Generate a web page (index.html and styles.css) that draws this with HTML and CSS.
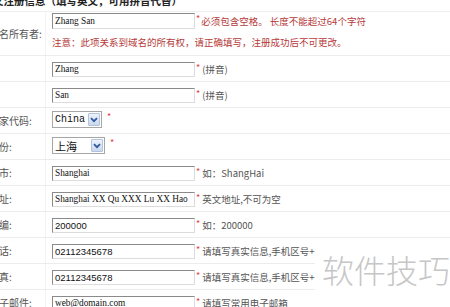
FILE: index.html
```html
<!DOCTYPE html>
<html lang="zh">
<head>
<meta charset="utf-8">
<link rel="stylesheet" href="styles.css">
</head>
<body>
<div class="page">
  <div class="title">文注册信息（填写英文，可用拼音代替）</div>
  <div class="form">
    <div class="row tall">
      <div class="label">域名所有者:</div>
      <div class="field">
        <div class="line"><span class="input">Zhang San</span><span class="star">*</span><span class="warn">必须包含空格。 长度不能超过64个字符</span></div>
        <div class="note">注意：此项关系到域名的所有权，请正确填写，注册成功后不可更改。</div>
      </div>
    </div>
    <div class="row">
      <div class="label"></div>
      <div class="field"><span class="input">Zhang</span><span class="star">*</span><span class="hint">(拼音)</span></div>
    </div>
    <div class="row">
      <div class="label"></div>
      <div class="field"><span class="input">San</span><span class="star">*</span><span class="hint">(拼音)</span></div>
    </div>
    <div class="row">
      <div class="label">国家代码:</div>
      <div class="field sel"><span class="select mono">China<span class="arrow"><svg width="8" height="6" viewBox="0 0 8 6"><path d="M1 1.2 L4 4.2 L7 1.2" fill="none" stroke="#2f5a9e" stroke-width="1.8"/></svg></span></span><span class="star sp">*</span></div>
    </div>
    <div class="row">
      <div class="label">省份:</div>
      <div class="field sel"><span class="select cn">上海<span class="arrow"><svg width="8" height="6" viewBox="0 0 8 6"><path d="M1 1.2 L4 4.2 L7 1.2" fill="none" stroke="#2f5a9e" stroke-width="1.8"/></svg></span></span><span class="star sp">*</span></div>
    </div>
    <div class="row">
      <div class="label">城市:</div>
      <div class="field"><span class="input">Shanghai</span><span class="star">*</span><span class="hint">如：ShangHai</span></div>
    </div>
    <div class="row">
      <div class="label">地址:</div>
      <div class="field"><span class="input">Shanghai XX Qu XXX Lu XX Hao</span><span class="star">*</span><span class="hint">英文地址,不可为空</span></div>
    </div>
    <div class="row">
      <div class="label">邮编:</div>
      <div class="field"><span class="input num">200000</span><span class="star">*</span><span class="hint">如：200000</span></div>
    </div>
    <div class="row">
      <div class="label">电话:</div>
      <div class="field"><span class="input num">02112345678</span><span class="star">*</span><span class="hint">请填写真实信息,手机区号+号码</span></div>
    </div>
    <div class="row">
      <div class="label">传真:</div>
      <div class="field"><span class="input num">02112345678</span><span class="star">*</span><span class="hint">请填写真实信息,手机区号+号码</span></div>
    </div>
    <div class="row">
      <div class="label">电子邮件:</div>
      <div class="field"><span class="input">web@domain.com</span><span class="star">*</span><span class="hint">请填写常用电子邮箱</span></div>
    </div>
  </div>
  <div class="watermark">软件技巧</div>
</div>
</body>
</html>
```

FILE: styles.css
```css
html, body {
  margin: 0;
  padding: 0;
  background: #fff;
  overflow: hidden;
  width: 450px;
  height: 307px;
}
.page {
  position: relative;
  width: 450px;
  height: 307px;
  overflow: hidden;
  font-family: "Noto Sans CJK SC", "Liberation Sans", sans-serif;
  font-size: 10px;
  color: #555;
}
.title {
  margin: -5px 0 0 -7px;
  height: 16px;
  line-height: 12px;
  font-weight: bold;
  font-size: 10.5px;
  color: #222;
  white-space: nowrap;
}
.form {
  margin-left: -11px;
  border-top: 1px solid #efefef;
}
.row {
  display: grid;
  grid-template-columns: 56px 1fr;
  height: 25px;
  border-bottom: 1px solid #ececec;
}
.row.tall {
  height: 43px;
}
.label {
  align-self: center;
  white-space: nowrap;
  color: #555;
  font-size: 10px;
  line-height: 12px;
}
.field {
  display: flex;
  align-items: flex-start;
  white-space: nowrap;
  border-left: 1px solid #f3f3f3;
  padding: 6px 0 0 6px;
}
.field.sel {
  padding-top: 3px;
}
.row.tall .field {
  flex-direction: column;
  padding-top: 1px;
  gap: 7px;
}
.line {
  display: flex;
  align-items: flex-start;
}
.input {
  box-sizing: border-box;
  width: 143px;
  height: 15px;
  border: 1px solid #b4b4b4;
  border-top-color: #8a8a8a;
  border-left-color: #8a8a8a;
  border-bottom-color: #dcdcdc;
  border-right-color: #dcdcdc;
  background: #fff;
  font-family: "Liberation Serif", serif;
  font-size: 9.3px;
  line-height: 13px;
  color: #111;
  padding: 0 2px;
  overflow: hidden;
}
.row.tall .input {
  height: 16px;
  line-height: 14px;
}
.input.num {
  font-family: "Liberation Sans", sans-serif;
  font-size: 9.5px;
}
.star {
  color: #e8393b;
  font-size: 9px;
  line-height: 9px;
  margin-left: 1px;
  margin-top: 1px;
}
.star.sp {
  margin-left: 5px;
}
.warn, .note {
  color: #b63a3a;
  font-size: 9.5px;
  line-height: 12px;
}
.warn {
  margin: 2px 0 0 1px;
}
.hint {
  color: #555;
  font-size: 9.5px;
  line-height: 12px;
  margin: 1px 0 0 2px;
}
.select {
  box-sizing: border-box;
  height: 17px;
  display: flex;
  align-items: center;
  border: 1px solid #a6a6a6;
  background: #fff;
  color: #111;
  padding-left: 2px;
}
.select.mono {
  width: 50px;
  font-family: "Liberation Mono", monospace;
  font-size: 10px;
}
.select.cn {
  width: 53px;
  font-size: 11px;
}
.arrow {
  margin-left: auto;
  width: 12px;
  height: 13px;
  margin-right: 1px;
  box-sizing: border-box;
  border: 1px solid #b3c3dc;
  border-radius: 1px;
  background: linear-gradient(#eef3fb, #c9d7ee);
  display: flex;
  align-items: center;
  justify-content: center;
}
.watermark {
  position: absolute;
  left: 315px;
  top: 245px;
  width: 135px;
  height: 48px;
  background: #fff;
  color: #c6c6c6;
  font-size: 32px;
  line-height: 48px;
  padding-left: 7px;
  box-sizing: border-box;
  white-space: nowrap;
  font-weight: 300;
}
```
